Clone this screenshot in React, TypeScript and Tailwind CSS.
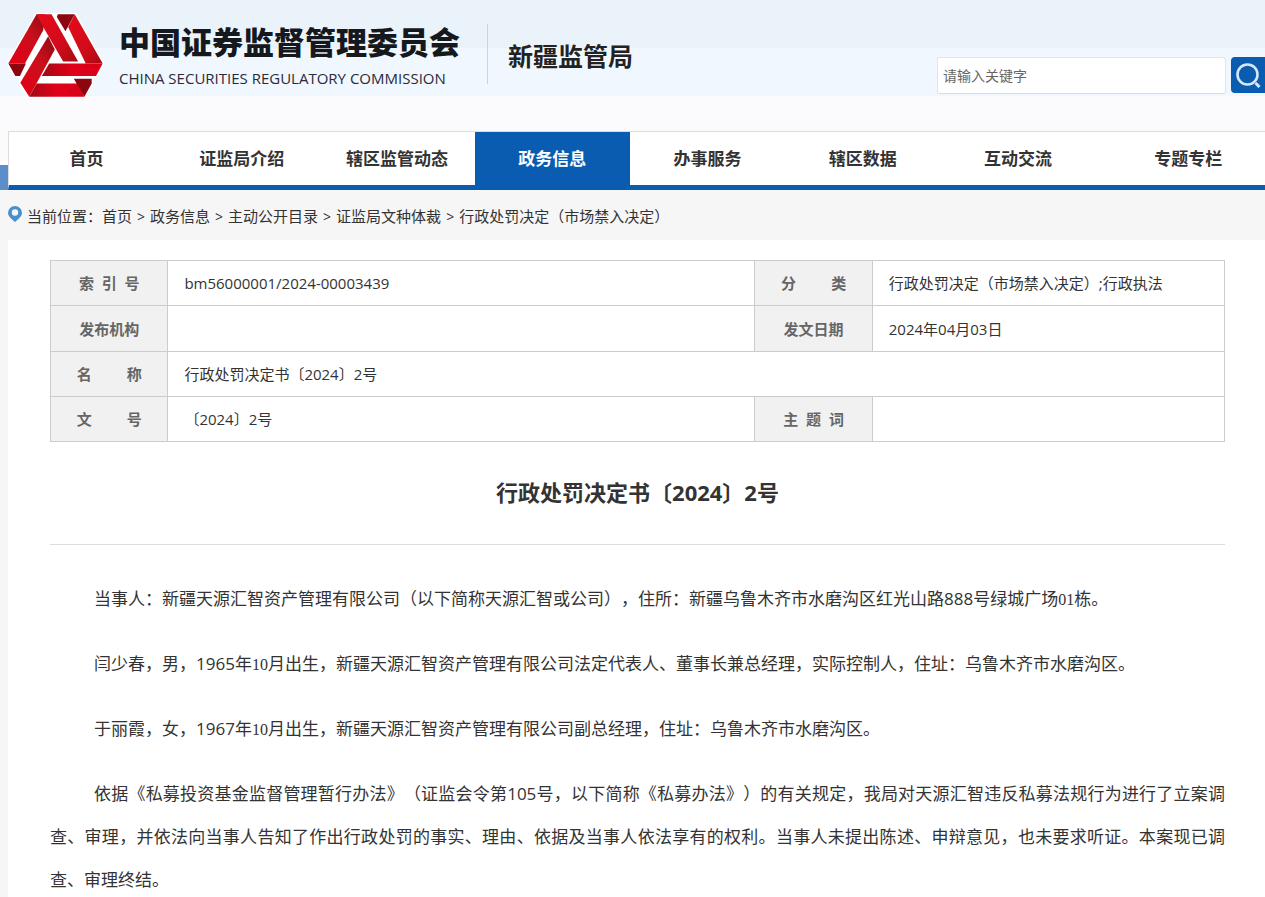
import type { ReactNode } from 'react';

const NAV_ITEMS = [
  '首页',
  '证监局介绍',
  '辖区监管动态',
  '政务信息',
  '办事服务',
  '辖区数据',
  '互动交流',
  '专题专栏',
];
const ACTIVE_ITEM = '政务信息';

const CRUMBS = ['首页', '政务信息', '主动公开目录', '证监局文种体裁', '行政处罚决定（市场禁入决定）'];

function Logo() {
  return (
    <svg className="h-[85px] w-[97px] shrink-0" viewBox="22 38 290 256" aria-hidden="true">
      <defs>
        <linearGradient id="bandLeft" x1="0" y1="1" x2="1" y2="0">
          <stop offset="0" stopColor="#e60012" />
          <stop offset="0.6" stopColor="#c8101c" />
          <stop offset="1" stopColor="#8e0a12" />
        </linearGradient>
        <linearGradient id="bandRight" x1="0" y1="0" x2="1" y2="1">
          <stop offset="0" stopColor="#e60a1a" />
          <stop offset="0.6" stopColor="#d20c1a" />
          <stop offset="1" stopColor="#a80a14" />
        </linearGradient>
        <linearGradient id="bandFlat" x1="0" y1="0" x2="1" y2="0">
          <stop offset="0" stopColor="#a00a14" />
          <stop offset="0.5" stopColor="#e2001a" />
          <stop offset="1" stopColor="#d8001a" />
        </linearGradient>
      </defs>
      <path fill="#fff" d="M108 38H229L314 190L293 232H280V250L254 294H82L56 250L60 232H43L20 190Z" />
      <path fill="url(#bandLeft)" d="M110 42H136L130 90L75 190H25Z" />
      <path fill="#8c0610" d="M25 190H78L60 228H46Z" />
      <path fill="url(#bandRight)" d="M110 42H155L235 184H190L130 80Z" />
      <path fill="#8c0610" d="M174 42H225L197 93L171 50Z" />
      <path fill="url(#bandRight)" d="M225 42L309 190H258L205 80Z" />
      <path fill="url(#bandFlat)" d="M148 190H309L289 228H126Z" />
      <path fill="url(#bandLeft)" d="M145 108L165 148L88 290L61 248Z" />
      <path fill="url(#bandFlat)" d="M110 250H234L254 290H88Z" />
      <path fill="#8c0610" d="M222 236H276V250L254 290Z" />
    </svg>
  );
}

function SearchBox() {
  return (
    <form className="flex h-[37px] gap-[5px]" role="search" onSubmit={(e) => e.preventDefault()}>
      <input
        type="text"
        aria-label="请输入关键字"
        placeholder="请输入关键字"
        className="w-[289px] rounded-[3px] border border-[#e4e4e4] border-b-[#dcdcdc] bg-white px-[5px] text-[14px] text-[#333] placeholder:text-[#666]"
      />
      <button
        type="submit"
        aria-label="搜索"
        className="flex h-9 w-[34px] items-center justify-center rounded-l-[4px] bg-[#0a5cb0]"
      >
        <svg className="h-[26px] w-[26px]" viewBox="0 0 26 26" fill="none" stroke="#d6e8fb" strokeWidth="2.6">
          <circle cx="12.5" cy="12.5" r="10" />
          <path d="M20.5 21L24.5 25" strokeWidth="3" />
        </svg>
      </button>
    </form>
  );
}

function LabelCell({ children }: { children: ReactNode }) {
  return (
    <th scope="row" className="border border-[#ccc] bg-[#f1f1f1] font-bold text-[#666]">
      {children}
    </th>
  );
}

function ValueCell({ children, span }: { children?: ReactNode; span?: number }) {
  return (
    <td colSpan={span} className="border border-[#ccc] px-4">
      {children}
    </td>
  );
}

function InfoTable() {
  return (
    <table className="w-full table-fixed border-collapse text-[15px] leading-[22px]">
      <colgroup>
        <col className="w-[10%]" />
        <col className="w-[50%]" />
        <col className="w-[10%]" />
        <col className="w-[30%]" />
      </colgroup>
      <tbody>
        <tr className="h-[45px]">
          <LabelCell>索&nbsp;&nbsp;引&nbsp;&nbsp;号</LabelCell>
          <ValueCell>bm56000001/2024-00003439</ValueCell>
          <LabelCell>分&nbsp;&nbsp;&nbsp;&nbsp;&nbsp;&nbsp;&nbsp;&nbsp;&nbsp;类</LabelCell>
          <ValueCell>行政处罚决定（市场禁入决定）;行政执法</ValueCell>
        </tr>
        <tr className="h-[46px]">
          <LabelCell>发布机构</LabelCell>
          <ValueCell />
          <LabelCell>发文日期</LabelCell>
          <ValueCell>2024年04月03日</ValueCell>
        </tr>
        <tr className="h-[45px]">
          <LabelCell>名&nbsp;&nbsp;&nbsp;&nbsp;&nbsp;&nbsp;&nbsp;&nbsp;&nbsp;称</LabelCell>
          <ValueCell span={3}>行政处罚决定书〔2024〕2号</ValueCell>
        </tr>
        <tr className="h-[45px]">
          <LabelCell>文&nbsp;&nbsp;&nbsp;&nbsp;&nbsp;&nbsp;&nbsp;&nbsp;&nbsp;号</LabelCell>
          <ValueCell>〔2024〕2号</ValueCell>
          <LabelCell>主&nbsp;&nbsp;题&nbsp;&nbsp;词</LabelCell>
          <ValueCell />
        </tr>
      </tbody>
    </table>
  );
}

// Numbers that the document sets in a serif face
function Num({ children }: { children: ReactNode }) {
  return <span className="font-['Liberation_Serif',serif] text-[16px] leading-none">{children}</span>;
}

export default function App() {
  return (
    <div
      lang="zh-CN"
      className="min-h-screen bg-[#f6f6f6] font-['Open_Sans','Noto_Sans_CJK_SC',sans-serif] text-[#333] [text-spacing-trim:space-all]"
    >
      {/* Header */}
      <header className="flex h-[131px] items-start bg-[linear-gradient(#eaf2fa_0_48px,#f0f7fe_48px_96px,#fbfbfd_96px)] pl-[7px]">
        <a href="#" className="flex items-start pt-[13px] text-[#15181c]">
          <Logo />
          <span className="flex flex-col pt-2 pl-[15px]">
            <span className="text-[31px] leading-[42px] font-black">中国证券监督管理委员会</span>
            <span className="text-[15px] leading-[30px] whitespace-nowrap text-[#2a2a3a]">
              CHINA SECURITIES REGULATORY COMMISSION
            </span>
          </span>
        </a>
        <div className="mt-6 ml-[27px] flex h-[60px] items-center border-l border-[#ccd3da] pl-5">
          <h2 className="pt-[3px] text-[25px] leading-8 font-bold text-[#222]">新疆监管局</h2>
        </div>
        <div className="ml-auto pt-[57px]">
          <SearchBox />
        </div>
      </header>

      {/* Main navigation */}
      <div className="flex items-end bg-[linear-gradient(#fbfbfb_0_30px,#fff_30px)]">
        <div className="h-[25px] w-2 shrink-0 bg-[#5c8fca]" />
        <nav className="grid flex-1 grid-cols-[repeat(7,11fr)_12fr] border-t border-b-[5px] border-l border-t-[#ddd] border-b-[#0a5cb0] border-l-[#ddd] bg-white">
          {NAV_ITEMS.map((item) => (
            <a
              key={item}
              href="#"
              className={
                item === ACTIVE_ITEM
                  ? 'bg-[#0a5cb0] pt-px text-center text-[17px] leading-[52px] font-bold text-white'
                  : 'pt-px text-center text-[17px] leading-[52px] font-bold last:pl-4'
              }
            >
              {item}
            </a>
          ))}
        </nav>
      </div>

      {/* Breadcrumb */}
      <div className="flex h-[50px] items-center gap-[5px] pl-2 text-[15px]">
        <svg className="mb-[2px] h-4 w-[14px] shrink-0" viewBox="0 0 14 16" aria-hidden="true">
          <path fill="#4a8fca" d="M7 0a7 7 0 0 1 7 7c0 3-3 5.500-7 9C3 12.500 0 10 0 7a7 7 0 0 1 7-7z" />
          <circle cx="7" cy="6.500" r="3.200" fill="#f3f8fc" />
        </svg>
        <p className="pt-[2px]">
          当前位置：
          {CRUMBS.map((crumb, i) => (
            <span key={crumb}>
              {i > 0 && <span className="px-[5px] text-[14px]">&gt;</span>}
              <a href="#">{crumb}</a>
            </span>
          ))}
        </p>
      </div>

      {/* Document */}
      <main className="ml-2 bg-white pt-5 pr-10 pl-[42px]">
        <InfoTable />

        <h1 className="border-b border-[#ddd] pt-[34px] pb-9 text-center text-[22px] leading-8 font-bold">
          行政处罚决定书〔2024〕2号
        </h1>

        <article className="space-y-[22px] pt-8 text-justify indent-[44px] text-[17px] leading-[43px]">
          <p>
            当事人：新疆天源汇智资产管理有限公司（以下简称天源汇智或公司），住所：新疆乌鲁木齐市水磨沟区红光山路888号绿城广场<Num>01</Num>栋。
          </p>
          <p>
            闫少春，男，1965年<Num>10</Num>月出生，新疆天源汇智资产管理有限公司法定代表人、董事长兼总经理，实际控制人，住址：乌鲁木齐市水磨沟区。
          </p>
          <p>
            于丽霞，女，1967年<Num>10</Num>月出生，新疆天源汇智资产管理有限公司副总经理，住址：乌鲁木齐市水磨沟区。
          </p>
          <p>
            依据《私募投资基金监督管理暂行办法》（证监会令第105号，以下简称《私募办法》）的有关规定，我局对天源汇智违反私募法规行为进行了立案调查、审理，并依法向当事人告知了作出行政处罚的事实、理由、依据及当事人依法享有的权利。当事人未提出陈述、申辩意见，也未要求听证。本案现已调查、审理终结。
          </p>
        </article>
      </main>
    </div>
  );
}
